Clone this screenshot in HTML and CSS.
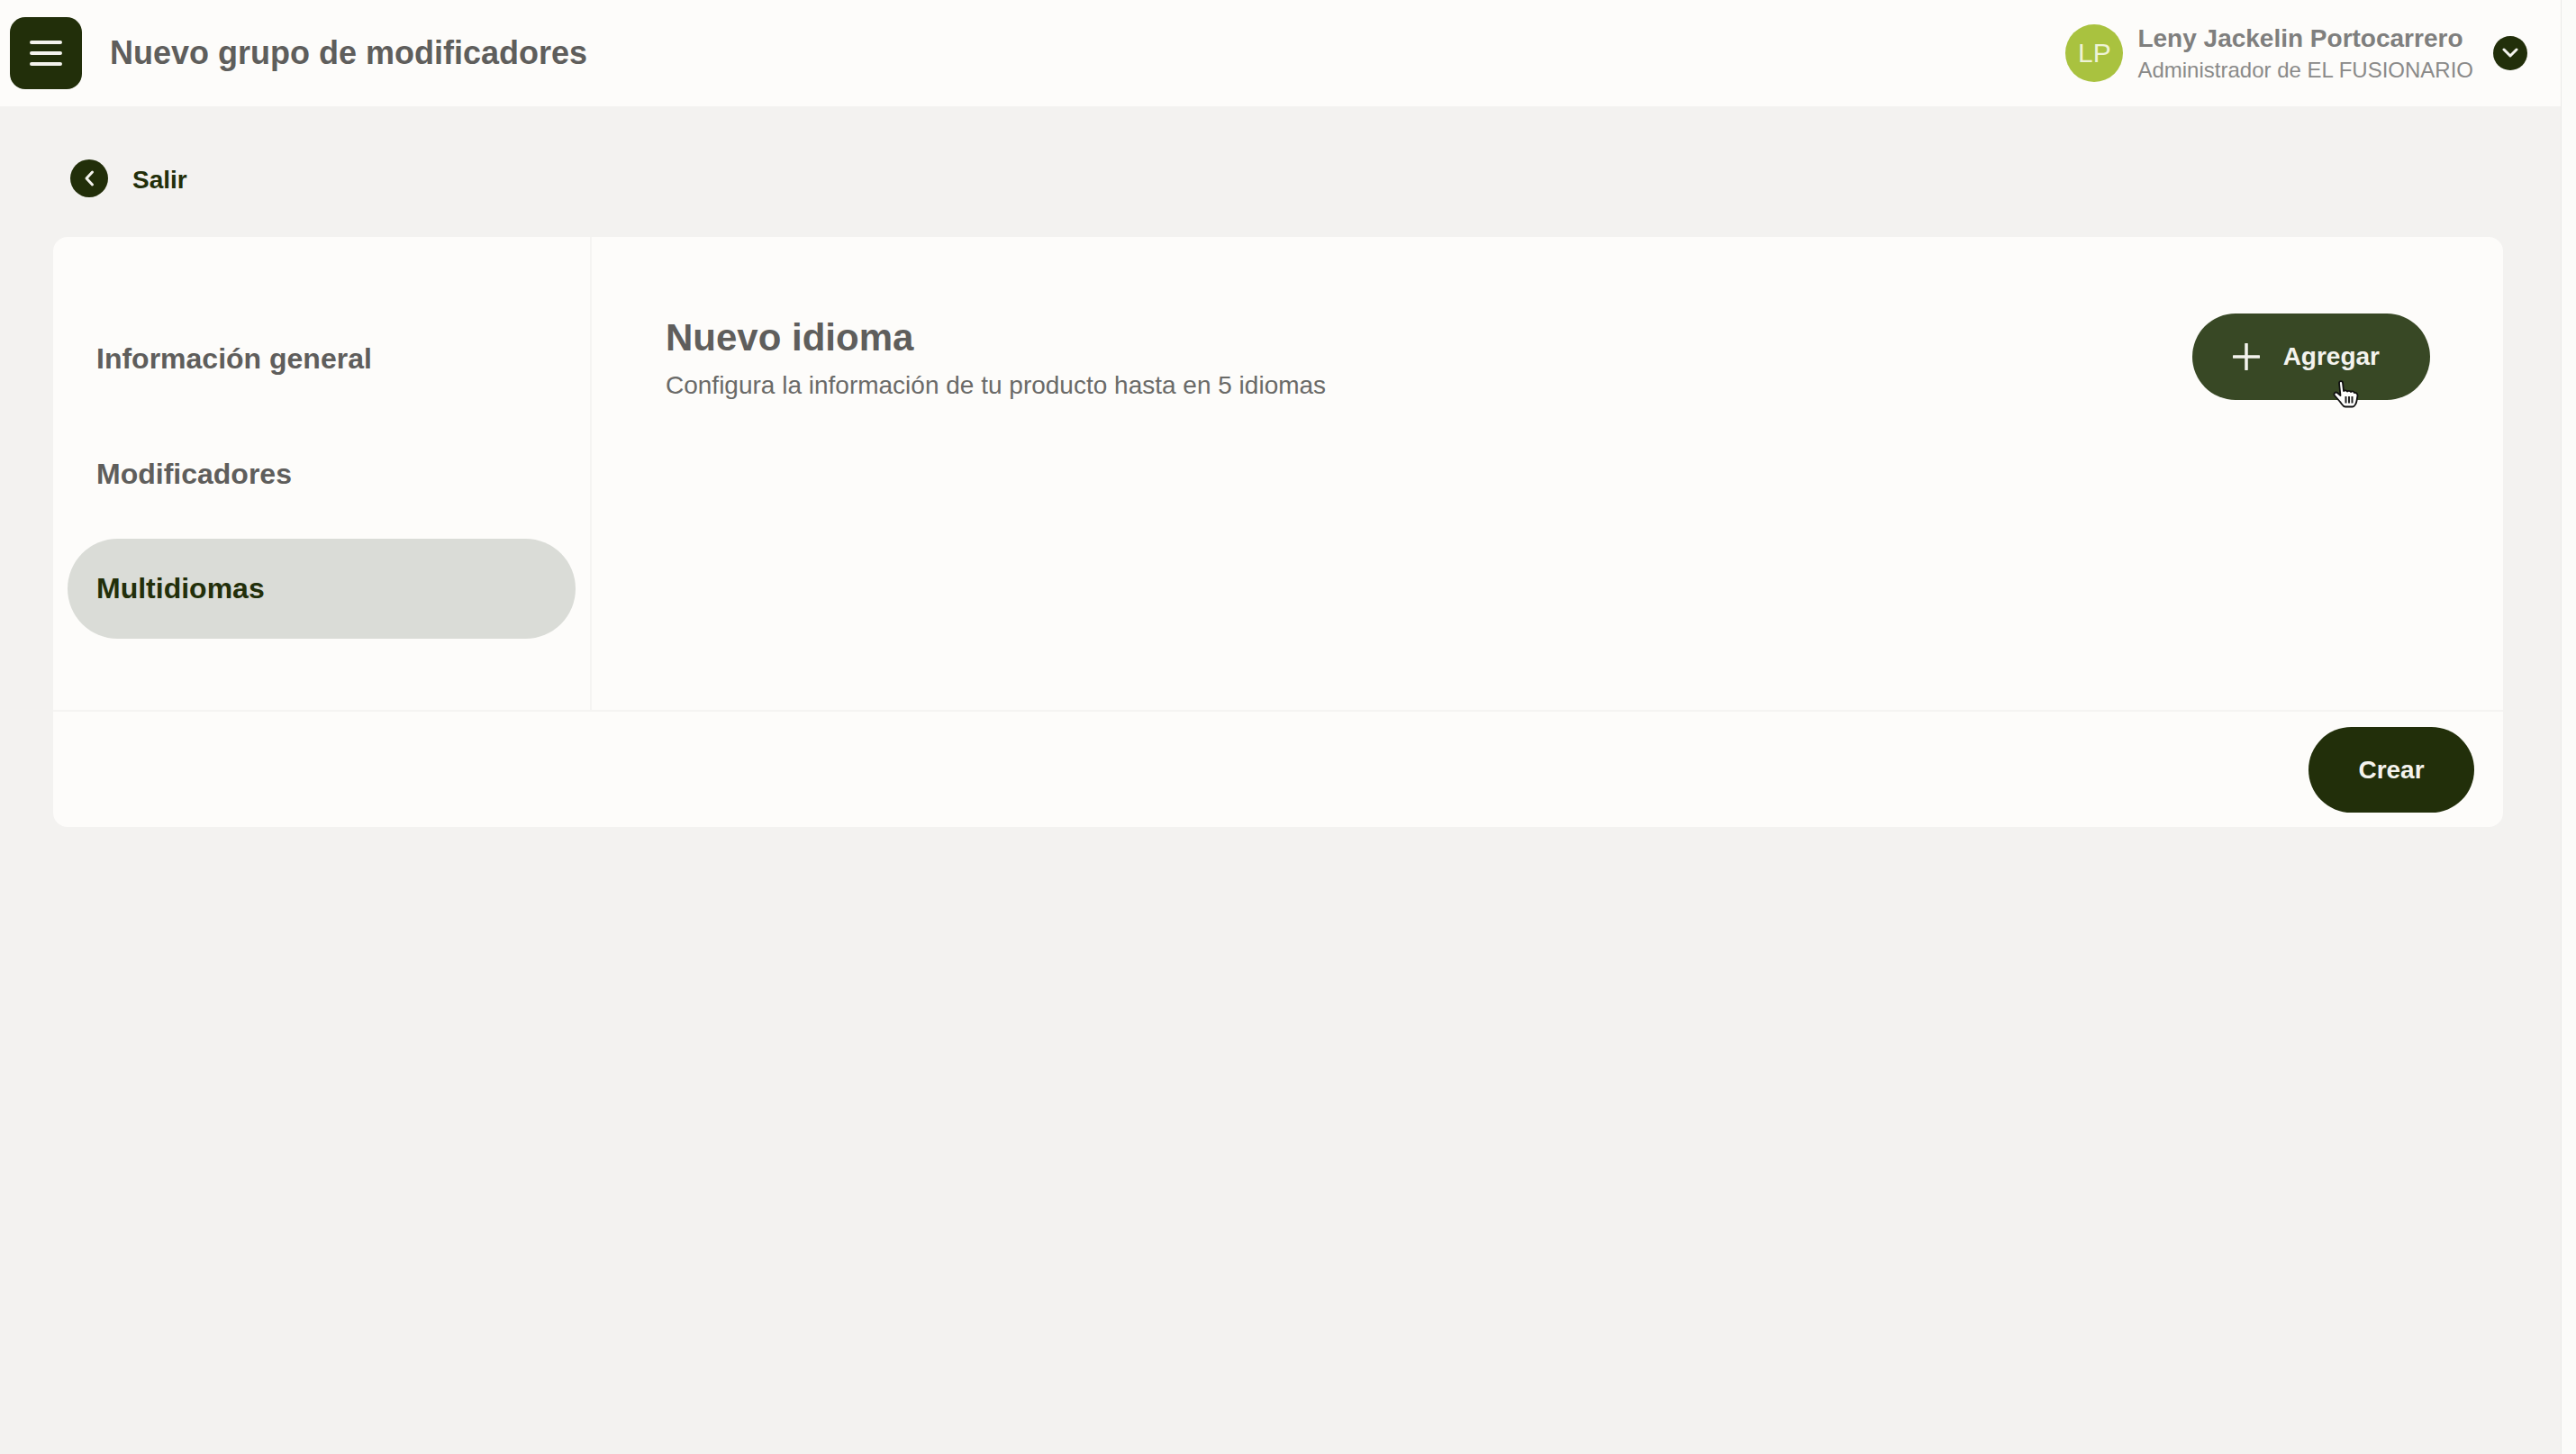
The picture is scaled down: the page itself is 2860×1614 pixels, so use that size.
FILE: index.html
```html
<!DOCTYPE html>
<html lang="es">

<head>
    <meta charset="UTF-8">
    <meta name="viewport" content="width=device-width, initial-scale=1.0">
    <title>Nuevo grupo de modificadores</title>
    <link rel="stylesheet" href="styles.css">
</head>

<body>
    <div class="page">
        <header class="topbar">
            <div class="menu-button">
                <svg width="36" height="28" viewBox="0 0 36 28">
                    <path d="M2 2H34M2 14H34M2 26H34" fill="none" stroke="#f4f3ee" stroke-width="4" stroke-linecap="round" />
                </svg>
            </div>
            <h1 class="page-title">Nuevo grupo de modificadores</h1>
            <div class="user">
                <div class="avatar">LP</div>
                <div class="user-text">
                    <div class="user-name">Leny Jackelin Portocarrero</div>
                    <div class="user-role">Administrador de EL FUSIONARIO</div>
                </div>
                <div class="user-toggle">
                    <svg width="18" height="12" viewBox="0 0 18 12">
                        <path d="M2 2L9 9L16 2" fill="none" stroke="#f4f3ee" stroke-width="3" stroke-linecap="round" stroke-linejoin="round" />
                    </svg>
                </div>
            </div>
        </header>

        <main class="content">
            <div class="back-link">
                <div class="back-icon">
                    <svg width="12" height="20" viewBox="0 0 12 20">
                        <path d="M9.5 3L3 10L9.5 17" fill="none" stroke="#f4f3ee" stroke-width="3" stroke-linecap="round" stroke-linejoin="round" />
                    </svg>
                </div>
                <span class="back-label">Salir</span>
            </div>

            <section class="card">
                <div class="card-body">
                    <nav class="side-nav">
                        <div class="nav-item">Información general</div>
                        <div class="nav-item">Modificadores</div>
                        <div class="nav-item active">Multidiomas</div>
                    </nav>
                    <div class="panel">
                        <div class="panel-text">
                            <h2 class="panel-title">Nuevo idioma</h2>
                            <p class="panel-sub">Configura la información de tu producto hasta en 5 idiomas</p>
                        </div>
                        <div class="add-button">
                            <svg width="30" height="30" viewBox="0 0 30 30">
                                <path d="M15 1V29M1 15H29" fill="none" stroke="#f4f3ee" stroke-width="3.5" stroke-linecap="round" />
                            </svg>
                            <span>Agregar</span>
                            <svg class="hand-cursor" width="29" height="31" viewBox="0 0 29 31">
                                <path d="M7 3C7 .5 11 .5 11 3L12 12C13 11 15 11 16 12.5C17 11.5 19 11.5 20 13C21 12 23 12 24 14C25.500 13.500 27.500 15 27.500 17L26.500 23C26 26 24 29.500 22 29.500L14 29.500C11 29.500 10 26 8 24L2 17C.5 15 3 12.500 5 14L8.500 17Z" fill="#fff" stroke="#111" stroke-width="1.800" stroke-linejoin="round" />
                                <path d="M14.500 18V25.500M18 18V25.500M21.500 18V25.500" fill="none" stroke="#222" stroke-width="2" />
                            </svg>
                        </div>
                    </div>
                </div>
                <footer class="card-footer">
                    <div class="create-button">Crear</div>
                </footer>
            </section>
        </main>
    </div>
</body>

</html>
```

FILE: styles.css
```css
* {
    box-sizing: border-box;
}

html,
body {
    margin: 0;
    height: 100%;
}

body {
    font-family: "Liberation Sans", Arial, sans-serif;
    background-color: #fbfbf9;
    overflow: hidden;
}

.page {
    width: 2844px;
    height: 100%;
    background-color: #f3f2f0;
    border-right: 1px solid #ebebe9;
}

.topbar {
    display: flex;
    align-items: center;
    height: 118px;
    padding: 0 37px 0 11px;
    background-color: #fdfcfa;
}

.menu-button {
    display: flex;
    align-items: center;
    justify-content: center;
    width: 80px;
    height: 80px;
    margin-right: 31px;
    background-color: #222f0a;
    border-radius: 17px;
}

.page-title {
    margin: 0;
    font-size: 36px;
    font-weight: bold;
    color: #5f5e5c;
}

.user {
    display: flex;
    align-items: center;
    margin-left: auto;
}

.avatar {
    display: flex;
    align-items: center;
    justify-content: center;
    width: 64px;
    height: 64px;
    margin-right: 16px;
    background-color: #a9c23f;
    border-radius: 50%;
    color: #eef3d6;
    font-size: 30px;
}

.user-text {
    padding-top: 2px;
    margin-right: 22px;
}

.user-name {
    font-size: 28px;
    line-height: 36px;
    font-weight: bold;
    color: #7f7f7e;
}

.user-role {
    font-size: 24px;
    line-height: 34px;
    color: #8a8a89;
}

.user-toggle {
    display: flex;
    align-items: center;
    justify-content: center;
    width: 38px;
    height: 38px;
    background-color: #222f0a;
    border-radius: 50%;
}

.content {
    padding: 59px 64px 0 59px;
}

.back-link {
    display: flex;
    align-items: center;
    height: 42px;
    padding-left: 19px;
    margin-bottom: 44px;
    font-size: 28px;
    font-weight: bold;
    color: #222f0a;
}

.back-icon {
    display: flex;
    align-items: center;
    justify-content: center;
    width: 42px;
    height: 42px;
    margin-right: 27px;
    background-color: #222f0a;
    border-radius: 50%;
}

.back-label {
    padding-top: 3px;
}

.card {
    background-color: #fdfcfa;
    border-radius: 16px;
}

.card-body {
    display: flex;
    height: 527px;
    border-bottom: 2px solid #f5f4f2;
}

.side-nav {
    display: flex;
    flex-direction: column;
    gap: 16.5px;
    width: 598px;
    padding: 80px 16px 0 16px;
    border-right: 2px solid #f5f4f2;
}

.nav-item {
    display: flex;
    align-items: center;
    height: 111px;
    padding-left: 32px;
    border-radius: 56px;
    font-size: 32px;
    font-weight: bold;
    color: #5f5e5c;
}

.nav-item.active {
    background-color: #dadcd7;
    color: #222f0a;
}

.panel {
    display: flex;
    flex: 1;
    justify-content: space-between;
    align-items: flex-start;
    padding: 85px 81px 0 82px;
}

.panel-title {
    margin: 0 0 8px;
    font-size: 42px;
    line-height: 54px;
    font-weight: bold;
    color: #5f5e5c;
}

.panel-sub {
    margin: 0;
    font-size: 28px;
    line-height: 36px;
    color: #6a6a68;
}

.add-button {
    position: relative;
    display: flex;
    align-items: center;
    gap: 26px;
    height: 96px;
    padding: 0 56px 0 45px;
    background-color: #384825;
    border-radius: 48px;
    font-size: 28px;
    font-weight: bold;
    color: #f4f3ee;
}

.hand-cursor {
    position: absolute;
    left: 156px;
    top: 74px;
}

.card-footer {
    display: flex;
    justify-content: flex-end;
    padding: 17px 32px 16px 0;
}

.create-button {
    display: flex;
    align-items: center;
    justify-content: center;
    width: 184px;
    height: 95px;
    background-color: #222f0a;
    border-radius: 48px;
    font-size: 28px;
    font-weight: bold;
    color: #f4f3ee;
}
```
